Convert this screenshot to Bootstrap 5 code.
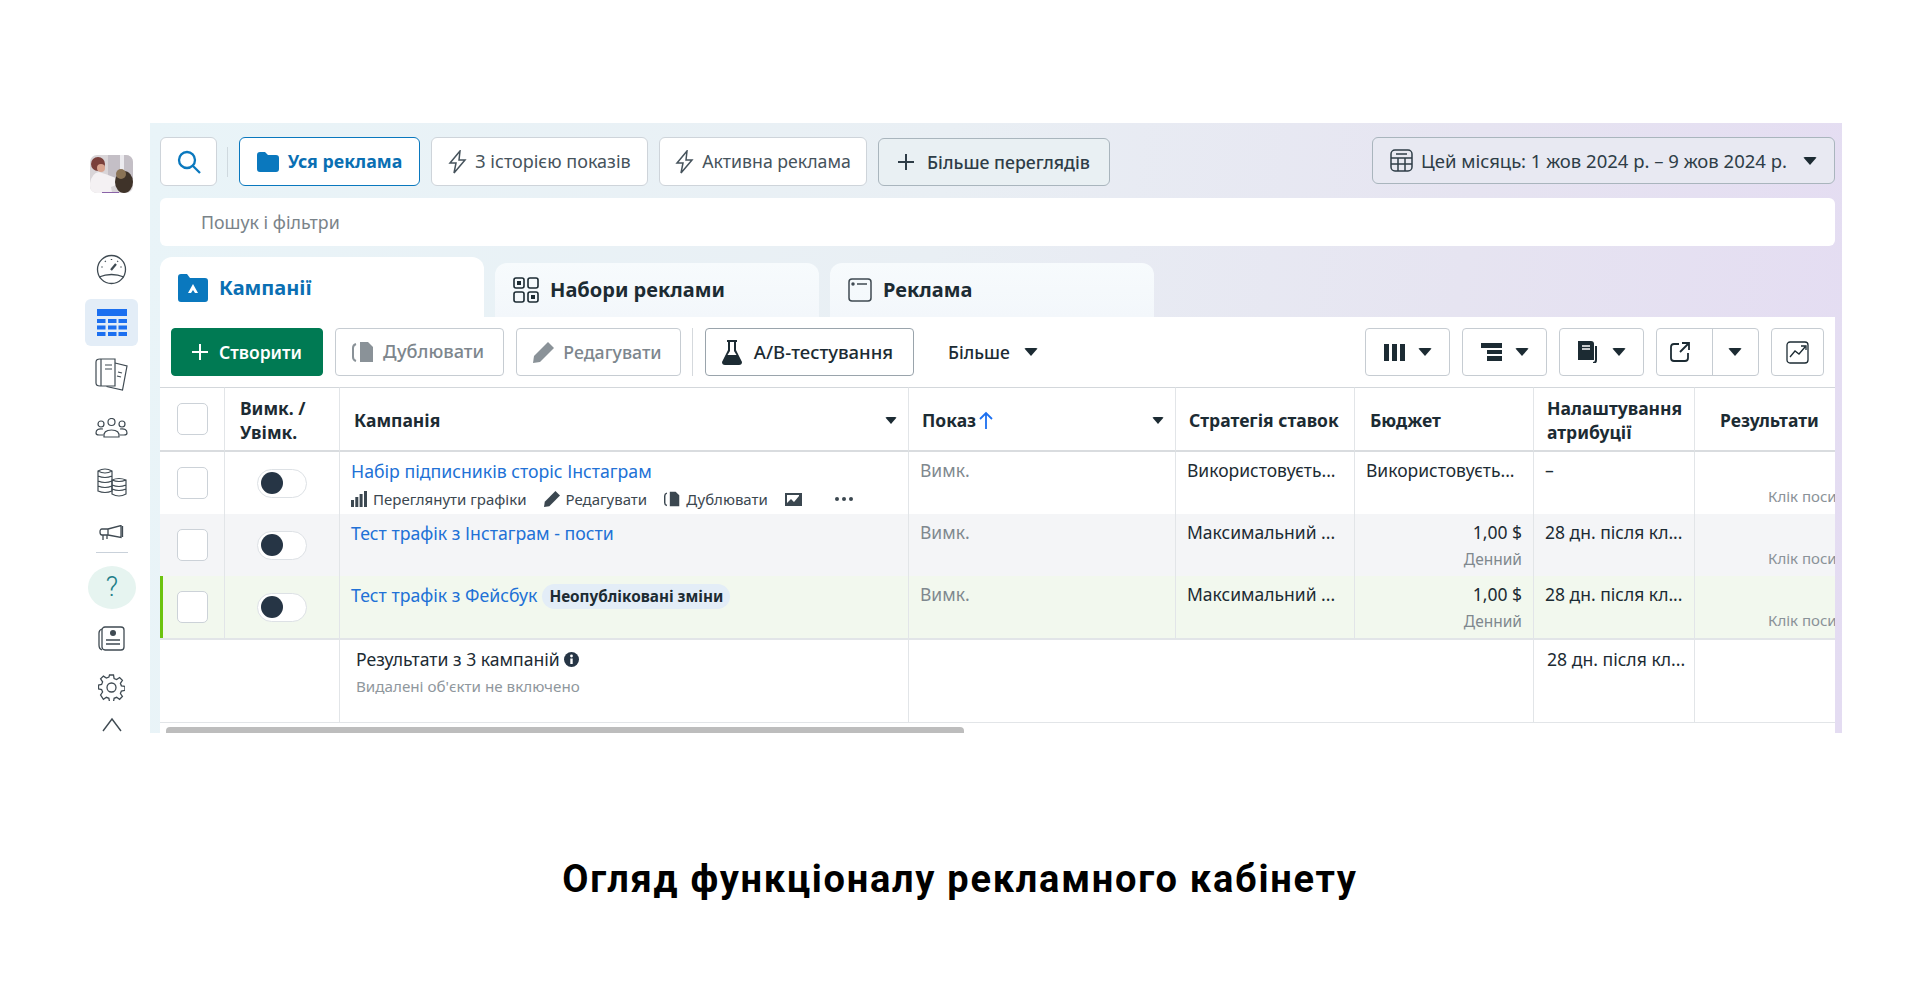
<!DOCTYPE html>
<html lang="uk">
<head>
<meta charset="utf-8">
<title>Огляд функціоналу рекламного кабінету</title>
<link href="https://cdn.jsdelivr.net/npm/bootstrap@5.3.0/dist/css/bootstrap.min.css" rel="stylesheet">
<style>
html,body{background:#fff;height:1000px;overflow:hidden}
body{font-family:"Noto Sans","Liberation Sans",sans-serif;color:#1c2b33}
svg{display:block;flex:none}
.shot{padding:123px 78px 0 85px;height:733px}
.rail{width:53px;margin-right:12px;height:610px;overflow:hidden;flex:none}
.rail-tile{width:53px;height:53px;background:#e3edf7;border-radius:6px}
.rail-help{width:48px;height:48px;background:#e6f4f0;border-radius:50%;color:#1f7f8a;font-family:Roboto,sans-serif;font-weight:300;font-size:27px;line-height:1;padding-left:1px}
.rail-rule{width:32px;height:1px;background:#c9d1da}
.av{width:43px;height:43px;border-radius:7px;overflow:hidden;margin-top:32px}
.m61{margin-top:61px}.m14{margin-top:14px}.m12{margin-top:12px}.m11{margin-top:11px}.m13{margin-top:13px}.m27{margin-top:27px}.m30{margin-top:30px}.m28{margin-top:28px}.m17{margin-top:17px}.m23{margin-top:23px}.m16{margin-top:16px}
.stage{width:1692px;height:610px;flex:none;overflow:hidden;padding:14px 7px 0 10px;background:linear-gradient(98deg,#e9f4f8 0%,#e9eff4 45%,#e6e4f1 75%,#e4dcf2 100%)}
.top-row{height:50px;gap:11px}
.chip{height:49px;background:#fff;border:1px solid #ced4da;border-radius:6px;font-size:17.7px;color:#46535c;padding:0;white-space:nowrap;gap:8px}
.chip-search{width:57px;margin-right:-1px}
.top-sep{width:1px;height:30px;background:#cfd9df}
.chip-all{width:181px;border-color:#0a78be;color:#0a6fb3;font-weight:700;gap:9px;font-size:17.8px}
.chip-hist{width:217px;font-size:18px}
.chip-act{width:208px}
.chip-more{width:232px;background:#e9f0f3;border-color:#a9b5bd;font-weight:500;color:#2e3d47;gap:13px;margin-top:1px;height:48px}
.chip-date{width:463px;margin-left:auto;background:#e8e9f2;border-color:#a9b5bd;color:#2e3d47;height:47px;font-size:18.5px}
.filter-bar{height:48px;margin-top:11px;background:#fff;border-radius:6px;padding-left:41px;font-size:17.8px;color:#7a8389}
.tab-row{gap:11px;height:71px}
.tab-on,.tab-off{width:324px;border-radius:12px 12px 0 0;font-weight:700;font-size:20px;gap:11px}
.tab-on{height:60px;background:#fff;color:#0a6fb3;padding:1px 0 0 18px}
.tab-off{height:54px;background:linear-gradient(#f7fbfd,#f3f7fb);padding-left:18px;color:#1c2b33}
.tools{height:70px;background:#fff;padding:11px 11px;gap:12px}
.tbtn{height:48px;background:#fff;border:1px solid #c6ccd2;border-radius:4px;font-size:18.2px;gap:9px;white-space:nowrap;color:#1c2b33;padding:0}
.tbtn-new{width:152px;background:#007a53;border-color:#007a53;color:#fff;font-weight:600;gap:11px;font-size:17.5px}
.tbtn-dup{width:169px;color:#7d868d;font-weight:500;padding-right:3px}
.tbtn-edit{width:165px;color:#7d868d;font-weight:500;font-size:17.7px;padding-right:2px}
.tsep{width:1px;height:48px;background:#d5d9dd;margin:0 0 0 -1px}
.tbtn-ab{width:209px;font-weight:500;border-color:#9aa4ac;font-size:18.5px;gap:12px;padding-right:4px}
.tplain{margin-left:22px;font-size:17.5px;font-weight:500;gap:14px}
.tbtn-drop{width:85px;gap:13px}
.tbtn-wrap{width:103px}
.tbtn-wrap>span{height:100%;width:52px}
.tbtn-wrap>span+span{border-left:1px solid #c6ccd2}
.tbtn-ico{width:53px}
.caret-d{width:0;height:0;border-left:7.5px solid transparent;border-right:7.5px solid transparent;border-top:8px solid #1c2b33;flex:none;border-radius:2px}
.caret-s{border-left-width:6px;border-right-width:6px;border-top-width:7px}
.ads{width:1675px;table-layout:fixed;margin:0;border-collapse:separate;border-spacing:0;font-size:17.5px;background:#fff;--bs-table-bg:transparent}
.ads td,.ads th{padding:0;border:0;border-right:1px solid #e2e5e8;overflow:hidden;vertical-align:top;white-space:nowrap;color:#1c2b33}
.ads td:last-child,.ads th:last-child{border-right:0}
.ads thead th{height:65px;border-top:1px solid #d3d7db;border-bottom:2px solid #d9dcdf;vertical-align:middle;font-weight:700;font-size:17.5px;line-height:24px;padding:2px 11px 0}
.ads thead th.hd-a{padding-left:15px}
.ads thead th.hd-b{padding-left:14px}
.ads thead th.hd-c{padding-left:13px}
.ads thead th.hd-d{padding-left:15px}
.ads thead th.hd-e{padding-left:25px}
.ads tbody td{height:62px;padding:6px 11px 0}
.ads tbody td.pad0,.ads thead th.pad0{padding:0;vertical-align:middle}
.ads .r2 td{background:#f4f5f7}
.ads .r3 td{background:#f2f8ee}
.ads .r3 td:first-child{box-shadow:inset 3px 0 0 #6cc30e}
.ads tfoot td{height:85px;border-top:2px solid #e2e5e8;border-bottom:1px solid #e2e5e8;padding:8px 13px 0}
.box{width:31px;height:32px;border:1px solid #ccd2d8;border-radius:5px;background:#fff;margin:auto}
.sw{width:50px;height:29px;border:1px solid #dde1e5;border-radius:15px;background:#fff;margin:auto;padding-left:3px}
.sw i{width:22px;height:22px;border-radius:50%;background:#263545;display:block}
.ads .lnk{color:#2171d6;text-decoration:none;font-size:17.7px;line-height:24px}
.ads td.muted-v{color:#7f888e;line-height:24px}
.ln{line-height:24px}
.subt{font-size:15.5px;color:#7f888e;line-height:20px;margin-top:5px}
.acts{font-size:15px;gap:6px;line-height:20px;margin-top:5px;color:#3b4750}
.acts>span{margin-right:11px;gap:6px}
.tag{background:#e3edf7;font-size:15.3px;font-weight:700;border-radius:13px;padding:0 7px;height:25px;line-height:25px;margin-left:5px;color:#1c2b33}
.hd-cell{gap:3px}
.ads tbody td.click{font-size:15px;color:#8a9298;padding:34px 0 0 73px;line-height:20px}
.foot-a{font-size:17.6px;line-height:22px}
.foot-b{font-size:15.2px;color:#8f979d;line-height:20px;margin-top:6px}
.scroller{height:12px;background:#fff;padding:4px 0 0 6px}
.scroller div{width:798px;height:8px;background:#bdbdbd;border-radius:4px 4px 0 0}
.cap{margin:121px 0 0;text-align:center;font-family:Roboto,"Liberation Sans",sans-serif;font-weight:700;font-size:38px;line-height:50px;color:#000;letter-spacing:1.73px}
</style>
</head>
<body>
<div class="shot d-flex">
  <aside class="rail d-flex flex-column align-items-center">
    <div class="av">
      <svg width="43" height="43" viewBox="0 0 43 43"><rect width="43" height="43" fill="#d9d5d8"/><rect x="18" width="25" height="24" fill="#c4bfc6"/><rect x="30" width="4" height="20" fill="#ecebef"/><circle cx="8" cy="9" r="7" fill="#7a3f3a"/><circle cx="11" cy="13" r="4" fill="#d9a48f"/><path d="M0 43V28q2-10 9-11 7 2 17 6l3 6-8 3 2 11z" fill="#f4f1f3"/><ellipse cx="34" cy="27" rx="9" ry="11" fill="#3f3329"/><circle cx="31" cy="19" r="5" fill="#8a7355"/><rect x="12" y="37" width="17" height="6" fill="#8a63a8"/></svg>
    </div>
    <svg class="m61" width="31" height="31" viewBox="0 0 31 31" fill="none" stroke="#3f4a52" stroke-width="1.300"><circle cx="15.500" cy="15.500" r="14"/><path d="M3 23q12.500-5 25 0"/><path d="M15 16l5-6" stroke-width="2.200"/><path d="M15.500 5v1M9 7l.7.8M22 7l-.7.8M5.500 13h1M24.500 13h1" stroke-width="1.400"/></svg>
    <div class="rail-tile m14 d-flex align-items-center justify-content-center">
      <svg width="30" height="27" viewBox="0 0 30 27" fill="#1b6ff0"><rect width="30" height="7"/><rect y="10" width="8.500" height="4"/><rect x="11" y="10" width="8.500" height="4"/><rect x="21.500" y="10" width="8.500" height="4"/><rect y="16.500" width="8.500" height="4"/><rect x="11" y="16.500" width="8.500" height="4"/><rect x="21.500" y="16.500" width="8.500" height="4"/><rect y="23" width="8.500" height="4"/><rect x="11" y="23" width="8.500" height="4"/><rect x="21.500" y="23" width="8.500" height="4"/></svg>
    </div>
    <svg class="m12" width="33" height="33" viewBox="0 0 33 33" fill="none" stroke="#3f4a52" stroke-width="1.200"><path d="M5 1h15v27H5q-4 0-4-3V4q0-3 4-3zM6 1v27"/><path d="M10 7h7M10 11h7"/><path d="M20 5l12 3-4.500 24-16-3.500"/><path d="M23 14l4 1M22 18l4 1"/></svg>
    <svg class="m27" width="33" height="20" viewBox="0 0 33 20" fill="none" stroke="#3f4a52" stroke-width="1.200"><circle cx="16.500" cy="4" r="3.500"/><circle cx="6" cy="6" r="3"/><circle cx="27" cy="6" r="3"/><path d="M9 19q-1-7 7.500-7t7.500 7z"/><path d="M8 11q-7-1-7 4 0 2 3 2h4M25 11q7-1 7 4 0 2-3 2h-4"/></svg>
    <svg class="m30" width="30" height="29" viewBox="0 0 30 29" fill="none" stroke="#3f4a52" stroke-width="1.200"><path d="M1 3q7-4 14 0v20q-7 3-14 0zM1 8q7 3 14 0M1 13q7 3 14 0M1 18q7 3 14 0M1 3q7 4 14 0"/><path d="M15 12q7-3 14 0v14q-7 4-14 0zM15 12q7 3 14 0M15 17q7 3 14 0M15 21q7 3 14 0"/></svg>
    <svg class="m28" width="25" height="16" viewBox="0 0 25 16" fill="none" stroke="#3f4a52" stroke-width="1.300"><path d="M9 4H3Q1 4 1 7t2 3h6zM9 4l13-3.500v12L9 10M23.500 1v11"/><path d="M4 10v5M8 10v4"/></svg>
    <div class="rail-rule m11"></div>
    <div class="rail-help m13 d-flex align-items-center justify-content-center">?</div>
    <svg class="m17" width="27" height="25" viewBox="0 0 27 25" fill="none" stroke="#3f4a52" stroke-width="1.300"><rect x="4" y="1" width="22" height="23" rx="3"/><path d="M4 3Q1 4 1 7v12q0 4 3 5"/><circle cx="15" cy="7" r="3" fill="#3f4a52" stroke="none"/><path d="M8 14h14M8 18h14"/></svg>
    <svg class="m23" width="27" height="27" viewBox="0 0 27 27" fill="none" stroke="#3f4a52" stroke-width="1.300"><circle cx="13.500" cy="13.500" r="4.500"/><path d="M11.500 1h4l.6 3.500 2.500 1 3-2 2.800 2.800-2 3 1 2.500 3.500.6v4l-3.500.6-1 2.500 2 3-2.800 2.800-3-2-2.500 1-.6 3.500h-4l-.6-3.500-2.500-1-3 2L2.600 21l2-3-1-2.500L.5 15v-4l3.100-.6 1-2.500-2-3L5.400 2.100l3 2 2.500-1z"/></svg>
    <svg class="m16" width="24" height="16" viewBox="0 0 24 16" fill="none" stroke="#3f4a52" stroke-width="1.400"><path d="M3 14L12 2l9 12"/></svg>
  </aside>

  <section class="stage">
    <div class="top-row d-flex align-items-start">
      <button class="chip chip-search d-flex align-items-center justify-content-center" aria-label="Пошук"><svg width="24" height="24" viewBox="0 0 24 24" fill="none" stroke="#0a78be" stroke-width="2.300"><circle cx="10" cy="10" r="8"/><path d="M16 16l7 7"/></svg></button>
      <span class="top-sep align-self-center"></span>
      <button class="chip chip-all d-flex align-items-center justify-content-center"><svg width="22" height="20" viewBox="0 0 22 20" fill="#0a78be"><path d="M0 3q0-3 3-3h5l3 3h8q3 0 3 3v11q0 3-3 3H3q-3 0-3-3z"/></svg>Уся реклама</button>
      <button class="chip chip-hist d-flex align-items-center justify-content-center"><svg width="19" height="24" viewBox="0 0 19 24" fill="none" stroke="#46535c" stroke-width="1.500"><path d="M12 1L2 13h6l-2 10 11-13h-6z"/></svg>З історією показів</button>
      <button class="chip chip-act d-flex align-items-center justify-content-center"><svg width="19" height="24" viewBox="0 0 19 24" fill="none" stroke="#46535c" stroke-width="1.500"><path d="M12 1L2 13h6l-2 10 11-13h-6z"/></svg>Активна реклама</button>
      <button class="chip chip-more d-flex align-items-center justify-content-center"><svg width="16" height="16" viewBox="0 0 16 16" stroke="#2e3d47" stroke-width="2"><path d="M8 0v16M0 8h16"/></svg>Більше переглядів</button>
      <button class="chip chip-date d-flex align-items-center justify-content-center"><svg width="23" height="23" viewBox="0 0 23 23" fill="none" stroke="#2e3d47" stroke-width="1.500"><rect x="1" y="1" width="21" height="21" rx="4"/><path d="M6 5h11M1 9h21M1 15h21M8 9v13M15 9v13"/></svg><span>Цей місяць: 1 жов 2024 р. – 9 жов 2024 р.</span><i class="caret-d ms-2"></i></button>
    </div>
    <div class="filter-bar d-flex align-items-center">Пошук і фільтри</div>
    <div class="tab-row d-flex align-items-end">
      <div class="tab-on d-flex align-items-center"><svg width="30" height="28" viewBox="0 0 30 28" fill="#0a78be"><path d="M0 3q0-3 3-3h6l3 4h15q3 0 3 3v18q0 3-3 3H3q-3 0-3-3z"/><path d="M15 10l5 9h-3l-2-3-2 3h-3z" fill="#fff"/></svg>Кампанії</div>
      <div class="tab-off d-flex align-items-center"><svg width="26" height="26" viewBox="0 0 26 26" fill="none" stroke="#1c2b33" stroke-width="1.600"><rect x="1" y="1" width="10" height="10" rx="2"/><rect x="15" y="1" width="10" height="10" rx="2"/><rect x="1" y="15" width="10" height="10" rx="2"/><rect x="15" y="15" width="10" height="10" rx="2"/><rect x="4" y="4" width="4" height="4" fill="#1c2b33" stroke="none"/><rect x="18" y="18" width="4" height="4" fill="#1c2b33" stroke="none"/></svg>Набори реклами</div>
      <div class="tab-off d-flex align-items-center"><svg width="24" height="24" viewBox="0 0 24 24" fill="none" stroke="#3f4a52" stroke-width="1.500"><rect x="1" y="1" width="22" height="22" rx="3"/><path d="M9 6h10"/><circle cx="5" cy="6" r="1" fill="#3f4a52"/></svg>Реклама</div>
    </div>
    <div class="tools d-flex align-items-center">
      <button class="tbtn tbtn-new d-flex align-items-center justify-content-center"><svg width="16" height="16" viewBox="0 0 16 16" stroke="#fff" stroke-width="2"><path d="M8 0v16M0 8h16"/></svg>Створити</button>
      <button class="tbtn tbtn-dup d-flex align-items-center justify-content-center"><svg width="22" height="22" viewBox="0 0 22 22" fill="#8a9298"><path d="M8 1h8l5 5v15H8z"/><path d="M4 3Q1 4 1 7v9q0 3 3 4" fill="none" stroke="#8a9298" stroke-width="2"/></svg>Дублювати</button>
      <button class="tbtn tbtn-edit d-flex align-items-center justify-content-center"><svg width="21" height="21" viewBox="0 0 21 21" fill="#8a9298"><path d="M15 0l6 6L7 20l-7 1 1-7z"/></svg>Редагувати</button>
      <span class="tsep"></span>
      <button class="tbtn tbtn-ab d-flex align-items-center justify-content-center"><svg width="20" height="25" viewBox="0 0 20 25" fill="#1c2b33"><path d="M5 0h10v2h-1v8l6 12q0 3-3 3H3q-3 0-3-3l6-12V2H5zM8 2v9L5.500 15h9L12 11V2z"/></svg>A/B-тестування</button>
      <button class="tbtn tplain border-0 d-flex align-items-center">Більше<i class="caret-d"></i></button>
      <button class="tbtn tbtn-drop ms-auto d-flex align-items-center justify-content-center"><svg width="21" height="17" viewBox="0 0 21 17" fill="#1c2b33"><rect width="5" height="17"/><rect x="8" width="5" height="17"/><rect x="16" width="5" height="17"/></svg><i class="caret-d"></i></button>
      <button class="tbtn tbtn-drop d-flex align-items-center justify-content-center"><svg width="21" height="18" viewBox="0 0 21 18" fill="#1c2b33"><rect width="21" height="5"/><rect x="6" y="7" width="15" height="4"/><rect x="6" y="13" width="15" height="5"/></svg><i class="caret-d"></i></button>
      <button class="tbtn tbtn-drop d-flex align-items-center justify-content-center"><svg width="22" height="22" viewBox="0 0 22 22" fill="#1c2b33"><path d="M1 0h13q3 0 3 3v16H1z"/><path d="M5 5h8M5 8h8" stroke="#fff" stroke-width="1.500"/><path d="M19 5v14q0 3-3 3" fill="none" stroke="#1c2b33" stroke-width="2"/></svg><i class="caret-d"></i></button>
      <div class="tbtn tbtn-wrap d-flex align-items-center">
        <span class="d-flex align-items-center justify-content-center"><svg width="20" height="20" viewBox="0 0 20 20" fill="none" stroke="#1c2b33" stroke-width="1.800"><path d="M9 2H4Q1 2 1 5v11q0 3 3 3h11q3 0 3-3v-5M12 1h7v7M19 1l-9 9"/></svg></span>
        <span class="d-flex align-items-center justify-content-center"><i class="caret-d"></i></span>
      </div>
      <button class="tbtn tbtn-ico d-flex align-items-center justify-content-center"><svg width="23" height="23" viewBox="0 0 23 23" fill="none" stroke="#1c2b33" stroke-width="1.300"><rect x="1" y="1" width="21" height="21" rx="3"/><path d="M4 16l5-6 4 3 6-7M15 5h5v4"/></svg></button>
    </div>
    <table class="table ads">
      <colgroup><col style="width:65px"><col style="width:115px"><col style="width:569px"><col style="width:267px"><col style="width:179px"><col style="width:179px"><col style="width:161px"><col style="width:140px"></colgroup>
      <thead>
        <tr>
          <th class="pad0"><div class="box"></div></th>
          <th class="hd-a">Вимк. /<br>Увімк.</th>
          <th class="hd-b"><div class="d-flex align-items-center justify-content-between"><span>Кампанія</span><i class="caret-d caret-s"></i></div></th>
          <th class="hd-c"><div class="d-flex align-items-center justify-content-between"><span class="d-flex align-items-center hd-cell">Показ<svg width="14" height="18" viewBox="0 0 14 18" fill="none" stroke="#1b6ff0" stroke-width="1.800"><path d="M7 18V2M1 8l6-6 6 6"/></svg></span><i class="caret-d caret-s"></i></div></th>
          <th class="hd-c">Стратегія ставок</th>
          <th class="hd-d">Бюджет</th>
          <th class="hd-c">Налаштування<br>атрибуції</th>
          <th class="hd-e">Результати</th>
        </tr>
      </thead>
      <tbody>
        <tr>
          <td class="pad0"><div class="box"></div></td>
          <td class="pad0"><div class="sw d-flex align-items-center"><i></i></div></td>
          <td><a class="lnk" href="#">Набір підписників сторіс Інстаграм</a>
            <div class="acts d-flex align-items-center">
              <span class="d-flex align-items-center"><svg width="16" height="16" viewBox="0 0 16 16" fill="#3b4750"><rect y="9" width="3" height="7"/><rect x="4.300" y="6" width="3" height="10"/><rect x="8.600" y="3" width="3" height="13"/><rect x="13" width="3" height="16"/></svg>Переглянути графіки</span>
              <span class="d-flex align-items-center"><svg width="16" height="16" viewBox="0 0 21 21" fill="#3b4750"><path d="M15 0l6 6L7 20l-7 1 1-7z"/></svg>Редагувати</span>
              <span class="d-flex align-items-center"><svg width="16" height="16" viewBox="0 0 22 22" fill="#3b4750"><path d="M8 1h8l5 5v15H8z"/><path d="M4 3Q1 4 1 7v9q0 3 3 4" fill="none" stroke="#3b4750" stroke-width="2"/></svg>Дублювати</span>
              <span class="d-flex align-items-center"><svg width="17" height="15" viewBox="0 0 17 15" fill="#3b4750"><path d="M0 1h17v13H0zM2 11l4-4 3 3 5-6v-1H2z" fill-rule="evenodd"/></svg></span>
              <span class="d-flex align-items-center gap-1 ms-3"><svg width="18" height="4" viewBox="0 0 18 4" fill="#3b4750"><circle cx="2" cy="2" r="2"/><circle cx="9" cy="2" r="2"/><circle cx="16" cy="2" r="2"/></svg></span>
            </div>
          </td>
          <td class="muted-v">Вимк.</td>
          <td class="ln">Використовуєть...</td>
          <td class="ln">Використовуєть...</td>
          <td class="ln">–</td>
          <td class="click">Клік посилання</td>
        </tr>
        <tr class="r2">
          <td class="pad0"><div class="box"></div></td>
          <td class="pad0"><div class="sw d-flex align-items-center"><i></i></div></td>
          <td><a class="lnk" href="#">Тест трафік з Інстаграм - пости</a></td>
          <td class="muted-v">Вимк.</td>
          <td class="ln">Максимальний ...</td>
          <td class="ln text-end">1,00 $<div class="subt">Денний</div></td>
          <td class="ln">28 дн. після кл...</td>
          <td class="click">Клік посилання</td>
        </tr>
        <tr class="r3">
          <td class="pad0"><div class="box"></div></td>
          <td class="pad0"><div class="sw d-flex align-items-center"><i></i></div></td>
          <td><a class="lnk" href="#">Тест трафік з Фейсбук</a><span class="tag d-inline-block">Неопубліковані зміни</span></td>
          <td class="muted-v">Вимк.</td>
          <td class="ln">Максимальний ...</td>
          <td class="ln text-end">1,00 $<div class="subt">Денний</div></td>
          <td class="ln">28 дн. після кл...</td>
          <td class="click">Клік посилання</td>
        </tr>
      </tbody>
      <tfoot>
        <tr>
          <td colspan="2"></td>
          <td class="ps-3"><div class="foot-a d-flex align-items-center gap-1">Результати з 3 кампаній <svg width="15" height="15" viewBox="0 0 15 15"><circle cx="7.500" cy="7.500" r="7.500" fill="#263545"/><rect x="6.300" y="6.500" width="2.400" height="5.500" fill="#fff"/><circle cx="7.500" cy="4" r="1.400" fill="#fff"/></svg></div><div class="foot-b">Видалені об'єкти не включено</div></td>
          <td colspan="3"></td>
          <td class="foot-a">28 дн. після кл...</td>
          <td></td>
        </tr>
      </tfoot>
    </table>
    <div class="scroller"><div></div></div>
  </section>
</div>
<h1 class="cap">Огляд функціоналу рекламного кабінету</h1>
<script src="https://cdn.jsdelivr.net/npm/bootstrap@5.3.0/dist/js/bootstrap.bundle.min.js"></script>
</body>
</html>
